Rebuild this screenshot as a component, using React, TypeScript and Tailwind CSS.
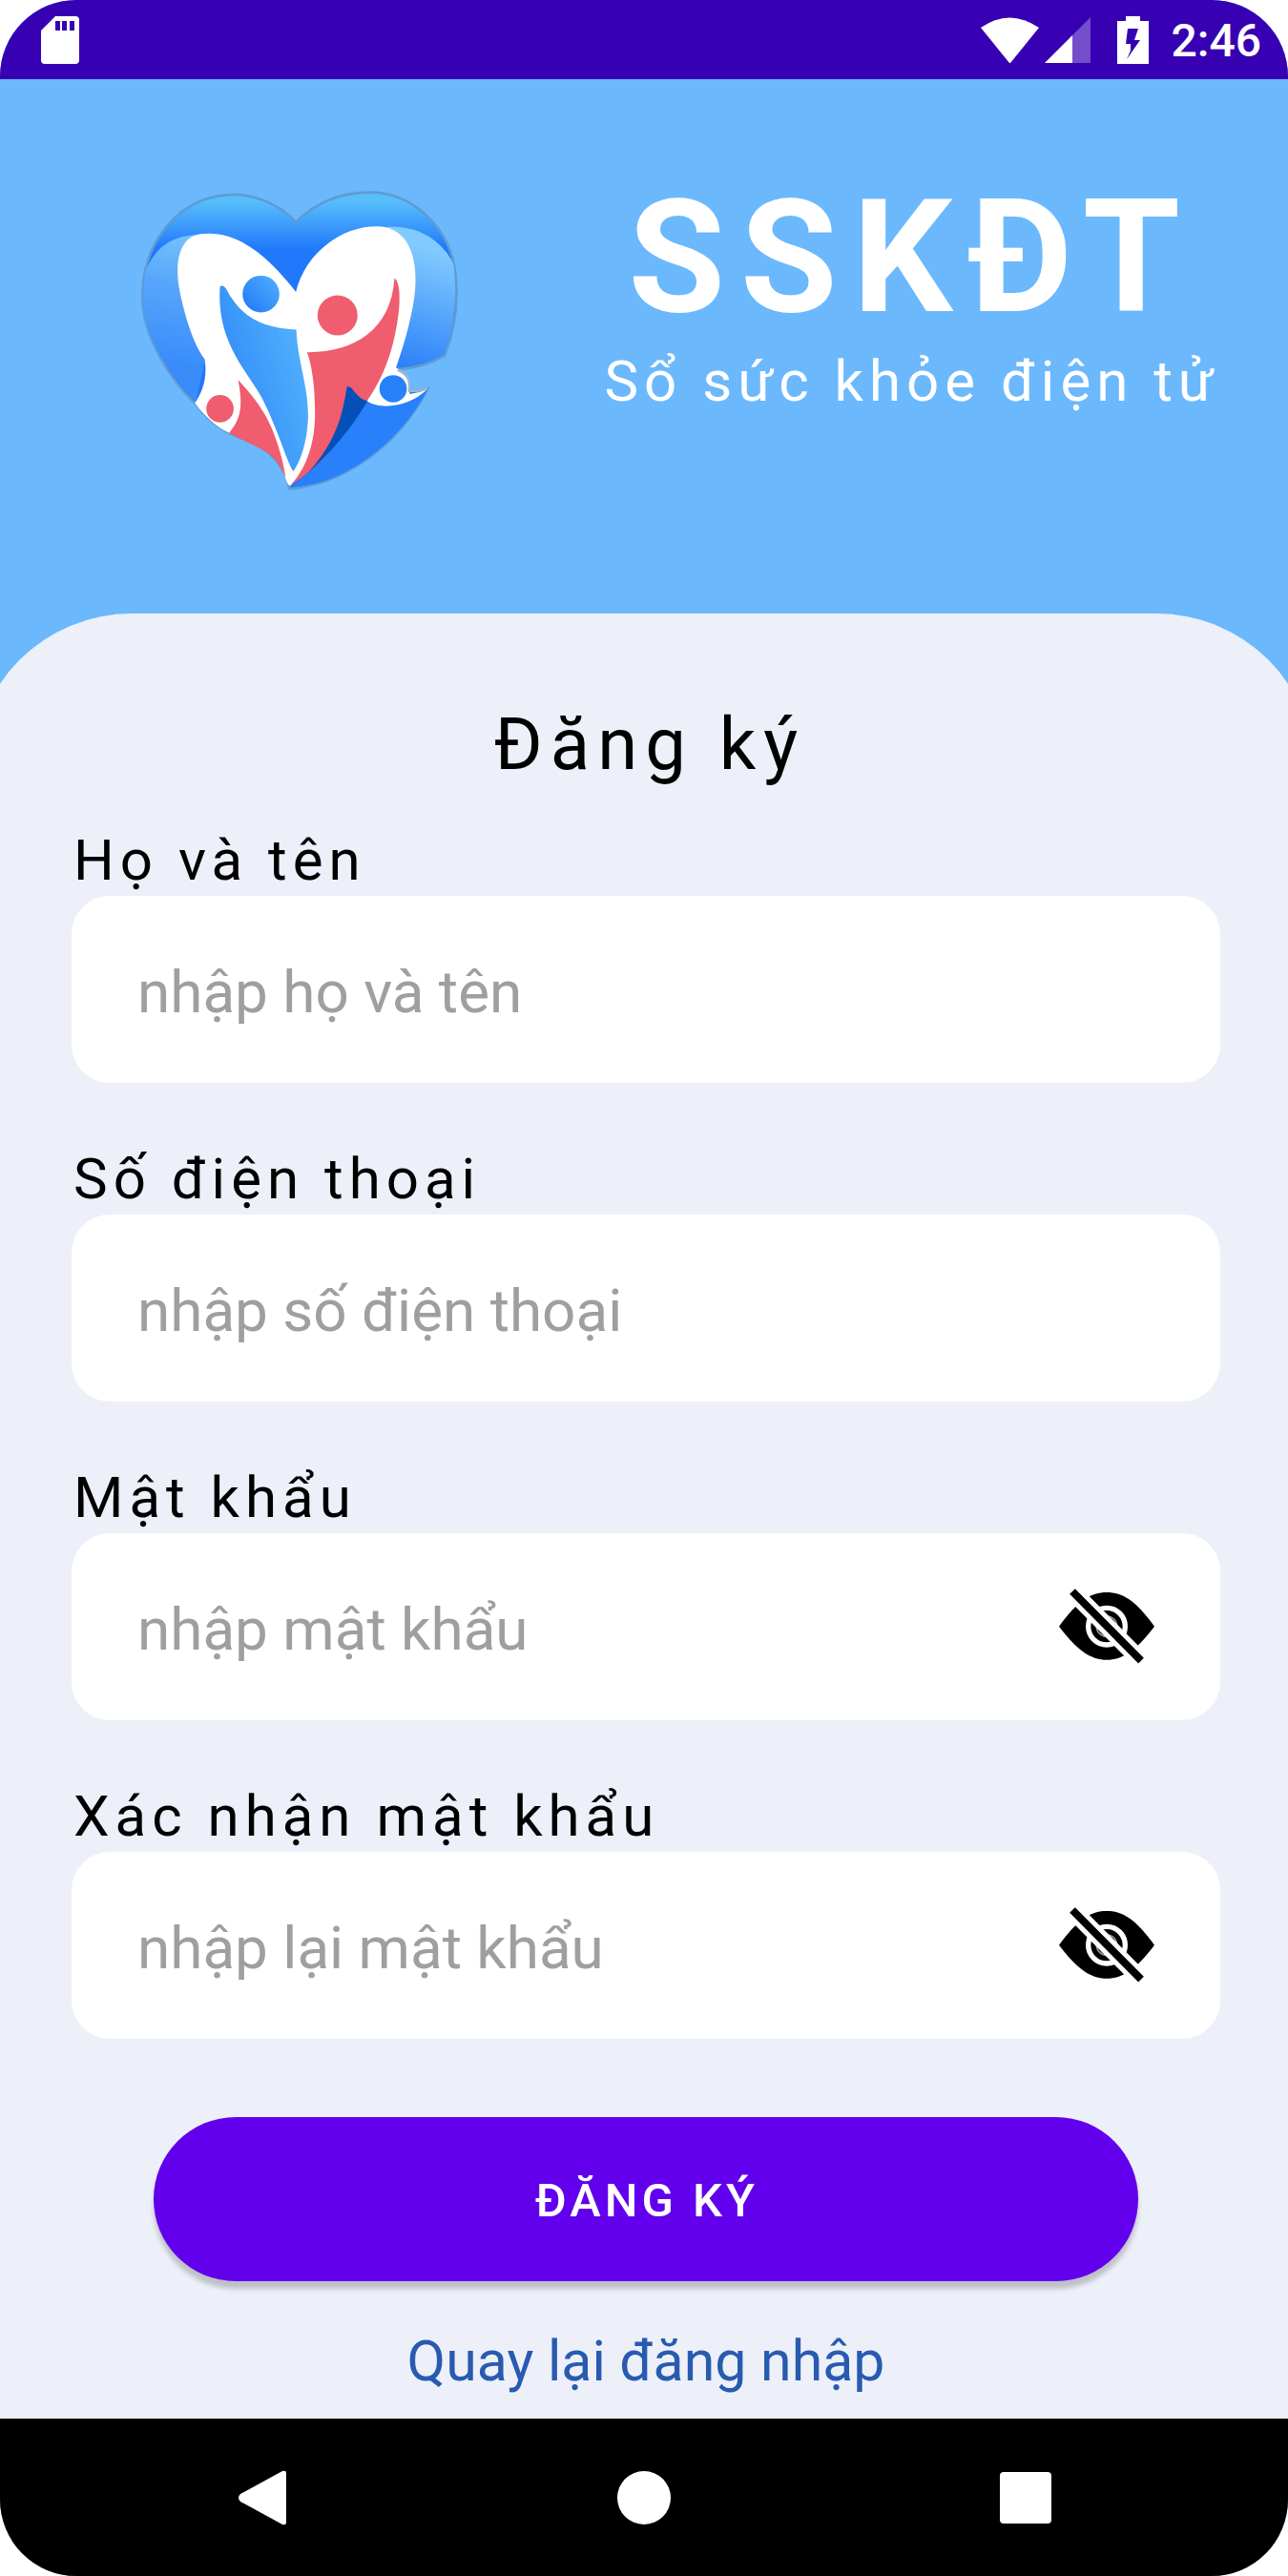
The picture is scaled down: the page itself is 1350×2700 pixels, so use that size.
import { useState } from "react";

const fields = [
  { id: "name", label: "Họ và tên", placeholder: "nhập họ và tên", type: "text", secret: false },
  { id: "phone", label: "Số điện thoại", placeholder: "nhập số điện thoại", type: "tel", secret: false },
  { id: "password", label: "Mật khẩu", placeholder: "nhập mật khẩu", type: "password", secret: true },
  { id: "confirm", label: "Xác nhận mật khẩu", placeholder: "nhập lại mật khẩu", type: "password", secret: true },
];

function StatusBar() {
  return (
    <div className="flex h-[83px] items-center justify-between bg-[#3700b3] pr-7 pl-[43px] text-white">
      <svg className="h-[50px] w-10" viewBox="0 0 40 50" aria-label="Thẻ nhớ">
        <path
          fill="currentColor"
          fillRule="evenodd"
          d="M15 0H36Q40 0 40 4V46Q40 50 36 50H4Q0 50 0 46V15ZM15 5V15H20V5ZM22 5V15H27V5ZM30 5V15H35V5Z"
        />
      </svg>
      <div className="flex items-center">
        <svg className="mr-1.5 h-12 w-[61px]" viewBox="0 0 61 48" aria-label="Wi-Fi">
          <path fill="currentColor" d="M0 11Q30 -10 61 11L31 48H30Z" />
        </svg>
        <svg className="mr-7 h-12 w-12" viewBox="0 0 48 48" aria-label="Sóng di động">
          <path fill="currentColor" fillOpacity="0.3" d="M48 0V48H29V19Z" />
          <path fill="currentColor" d="M29 19V48H0Z" />
        </svg>
        <svg className="mr-6 h-[50px] w-[33px]" viewBox="0 0 33 50" aria-label="Pin đang sạc">
          <path
            fill="currentColor"
            fillRule="evenodd"
            d="M9 0H24V5H33V50H0V5H9ZM11 13L9 29H14V36L10 45L24 25H18L22 13Z"
          />
        </svg>
        <span className="pt-0.5 text-[48px] leading-[56px] font-medium">2:46</span>
      </div>
    </div>
  );
}

function Logo() {
  return (
    <svg className="h-[317px] w-[333px]" viewBox="50 55 1000 950" role="img" aria-label="SSKĐT">
      <defs>
        <linearGradient id="top" gradientUnits="userSpaceOnUse" x1="0" y1="95" x2="0" y2="245">
          <stop offset="0" stopColor="#57bdfb" />
          <stop offset="1" stopColor="#2078fb" />
        </linearGradient>
        <linearGradient id="left" gradientUnits="userSpaceOnUse" x1="200" y1="200" x2="130" y2="600">
          <stop offset="0" stopColor="#74c2fd" />
          <stop offset="0.4" stopColor="#57a5fb" />
          <stop offset="1" stopColor="#3a8cfb" />
        </linearGradient>
        <linearGradient id="right" gradientUnits="userSpaceOnUse" x1="1010" y1="260" x2="900" y2="610">
          <stop offset="0" stopColor="#80cafe" />
          <stop offset="1" stopColor="#2f83f9" />
        </linearGradient>
        <linearGradient id="body" gradientUnits="userSpaceOnUse" x1="360" y1="720" x2="570" y2="660">
          <stop offset="0" stopColor="#3590f9" />
          <stop offset="1" stopColor="#4eadfb" />
        </linearGradient>
        <linearGradient id="head" x1="0.1" y1="0.9" x2="0.9" y2="0.1">
          <stop offset="0" stopColor="#257cfa" />
          <stop offset="1" stopColor="#4cabfb" />
        </linearGradient>
      </defs>
      <path
        fill="url(#top)"
        stroke="#5d9cd2"
        strokeWidth="8"
        d="M540 158C480 95 400 70 340 72C180 75 60 210 57 390C55 520 150 660 222 728C260 780 300 808 330 822C400 855 490 870 520 998C680 985 860 870 955 682L892 692L858 622C920 618 970 600 1008 578C1040 500 1052 420 1042 320C1025 170 900 62 770 65C660 65 590 110 540 158Z"
      />
      <path fill="url(#left)" d="M66 315C100 228 160 198 245 198L300 500L255 590L225 724C130 620 60 520 59 390Q60 350 66 315Z" />
      <path fill="url(#right)" d="M820 175C920 165 1000 215 1036 290C1050 400 1035 500 1006 574C965 598 920 612 855 616L800 400Z" />
      <path
        fill="#fff"
        d="M240 196C370 180 470 290 540 378C565 270 670 170 800 172C915 178 925 310 912 400C900 480 875 560 855 616L892 640L898 700Q930 695 953 684C900 742 800 750 765 722L523 988C508 990 505 940 470 880L330 822C300 808 260 780 222 728C245 695 262 650 253 590C215 540 190 450 175 380C155 280 175 205 240 196Z"
      />
      <path fill="#6cb8fd" d="M870 630L915 622L965 640L955 682L900 690Q905 640 870 630Z" />
      <path
        fill="url(#body)"
        d="M301 362Q310 354 320 368C365 455 430 492 541 497C545 600 582 680 578 780C575 850 555 910 532 943C515 925 470 770 420 690C370 610 290 520 301 362Z"
      />
      <path fill="#ef5d6e" d="M358 655C400 700 440 750 465 810C485 860 500 910 508 965C470 870 430 880 330 822C365 780 375 740 358 655Z" />
      <path
        fill="#ef5d6e"
        d="M575 568C720 570 840 500 850 335C872 350 868 430 858 480C845 560 820 640 765 720L630 900C590 940 550 970 525 985C575 930 602 850 600 750C600 670 588 600 575 568Z"
      />
      <path fill="#2881fa" d="M762 722C800 745 890 755 955 685C870 850 690 990 525 992C600 940 690 850 762 722Z" />
      <path fill="#0450b8" d="M700 677Q712 674 722 690Q742 716 765 722C720 800 650 885 575 950C650 870 685 790 700 677Z" />
      <circle cx="430" cy="385" r="58" fill="url(#head)" />
      <circle cx="671" cy="452" r="63" fill="#ef5d6e" />
      <circle cx="301" cy="746" r="43" fill="#ef5d6e" />
      <circle cx="846" cy="683" r="50" fill="#fff" />
      <circle cx="846" cy="683" r="43" fill="#2881fa" />
      <path fill="none" stroke="#9fb6c8" strokeWidth="7" d="M860 624Q905 640 896 690Q930 692 953 683" />
    </svg>
  );
}

function EyeOff() {
  return (
    <svg className="h-[82px] w-[100px]" viewBox="0 0 300 246" aria-hidden="true">
      <path d="M0 122C60 40 100 15 150 15S240 40 300 122C240 200 200 227 150 227S60 200 0 122Z" />
      <circle cx="150" cy="122" r="58" fill="none" stroke="#fff" strokeWidth="16" />
      <circle cx="150" cy="122" r="32" fill="none" stroke="#999" strokeWidth="5" />
      <path d="M12 -18L288 260" stroke="#fff" strokeWidth="54" />
      <path d="M42 12L258 230" stroke="#000" strokeWidth="24" />
    </svg>
  );
}

function Field({ id, label, placeholder, type, secret }: (typeof fields)[number]) {
  const [shown, setShown] = useState(false);
  return (
    <div>
      <label htmlFor={id} className="block pb-0.5 pl-0.5 text-[60px] leading-[70px] tracking-[6px]">
        {label}
      </label>
      <div className="flex h-[196px] items-center rounded-[40px] bg-white px-[69px]">
        <input
          id={id}
          type={secret && shown ? "text" : type}
          placeholder={placeholder}
          className="h-full min-w-0 flex-1 bg-transparent pt-1 text-[62px] outline-none placeholder:text-[#9f9f9f]"
        />
        {secret && (
          <button type="button" aria-label="Hiện mật khẩu" onClick={() => setShown(!shown)}>
            <EyeOff />
          </button>
        )}
      </div>
    </div>
  );
}

function NavBar() {
  return (
    <nav className="grid h-[165px] grid-cols-[1fr_250px_1fr] items-center bg-black text-white">
      <button type="button" aria-label="Quay lại" className="justify-self-center">
        <svg className="h-[58px] w-[50px]" viewBox="0 0 50 58">
          <path fill="currentColor" d="M50 3V55Q50 58 46 57L2 33Q-2 29 2 25L46 1Q50 0 50 3Z" />
        </svg>
      </button>
      <button type="button" aria-label="Trang chủ" className="size-14 justify-self-center rounded-full bg-white" />
      <button type="button" aria-label="Gần đây" className="size-[54px] justify-self-center rounded-[4px] bg-white" />
    </nav>
  );
}

export default function App() {
  return (
    <div className="flex min-h-screen flex-col overflow-hidden rounded-[80px] bg-[#6cb8fd] font-['Roboto',sans-serif] text-black">
      <StatusBar />
      <header className="flex h-[560px] items-start justify-between pr-[72px] pl-[147px]">
        <div className="pt-[115px]">
          <Logo />
        </div>
        <div className="pt-[90px] text-center text-white">
          <h1 className="text-[165px] leading-[194px] font-bold tracking-[16px]">SSKĐT</h1>
          <p className="text-[60px] leading-[66px] tracking-[6px]">Sổ sức khỏe điện tử</p>
        </div>
      </header>
      <main className="-mx-7 flex-1 rounded-t-[166px] bg-[#edf0f9] pt-[92px] pr-[99px] pb-6 pl-[103px]">
        <h2 className="mb-[42px] pl-2 text-center text-[76px] leading-[90px] tracking-[8px]">Đăng ký</h2>
        <form onSubmit={(event) => event.preventDefault()}>
          <div className="flex flex-col gap-[66px]">
            {fields.map((field) => (
              <Field key={field.id} {...field} />
            ))}
          </div>
          <div className="mt-[82px] px-[86px]">
            <button
              type="submit"
              className="h-[172px] w-full rounded-full bg-[#6200ee] pt-1 pl-0.5 text-[49px] font-medium tracking-[4px] text-white shadow-[0_8px_5px_rgba(0,0,0,0.2)]"
            >
              ĐĂNG KÝ
            </button>
          </div>
        </form>
        <p className="mt-12 text-center text-[59px] leading-[72px] text-[#285baf]">
          <a href="#login">Quay lại đăng nhập</a>
        </p>
      </main>
      <NavBar />
    </div>
  );
}
